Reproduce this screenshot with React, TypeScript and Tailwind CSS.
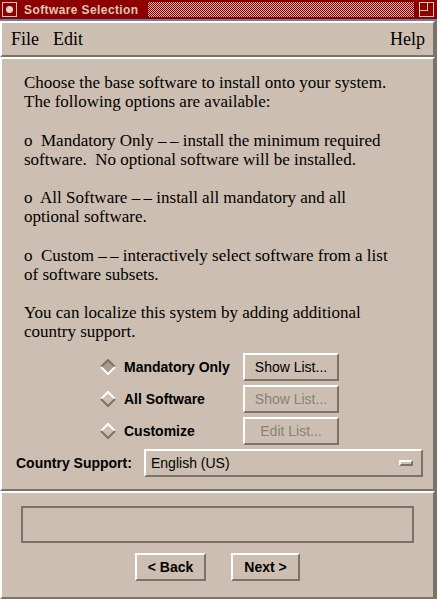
import React from "react";

const serif = "font-['Liberation_Serif','Times_New_Roman',serif]";
const sans = "font-['Liberation_Sans',Arial,sans-serif]";

function Diamond({ selected }: { selected?: boolean }) {
  const top = selected ? "#7b7268" : "#ffffff";
  const bot = selected ? "#ffffff" : "#7b7268";
  return (
    <svg width="16" height="16" viewBox="0 0 16 16" className="block">
      <polygon points="8,1 15,8 8,15 1,8" fill={selected ? "#a89c90" : "#ccbfb1"} />
      <polyline points="1,8 8,1 15,8" fill="none" stroke={top} strokeWidth="2" />
      <polyline points="1,8 8,15 15,8" fill="none" stroke={bot} strokeWidth="2" />
    </svg>
  );
}

function Btn({
  children,
  disabled,
  className = "",
  bold,
}: {
  children: React.ReactNode;
  disabled?: boolean;
  className?: string;
  bold?: boolean;
}) {
  return (
    <div
      className={`flex items-center justify-center border-2 border-t-white border-l-white border-r-[#7b7268] border-b-[#7b7268] bg-[#ccbfb1] text-[14px] ${sans} ${
        bold ? "font-bold" : ""
      } ${disabled ? "text-[#8a8178]" : "text-black"} ${className}`}
    >
      {children}
    </div>
  );
}

const D = "\u2013\u2009\u2013";

export default function App() {
  const paras = [
    ["Choose the base software to install onto your system.", "The following options are available:"],
    [`o  Mandatory Only ${D} install the minimum required`, "software.  No optional software will be installed."],
    [`o  All Software ${D} install all mandatory and all`, "optional software."],
    [`o  Custom ${D} interactively select software from a list`, "of software subsets."],
    ["You can localize this system by adding additional", "country support."],
  ];
  const rows = [
    { label: "Mandatory Only", btn: "Show List...", sel: true, dis: false },
    { label: "All Software", btn: "Show List...", sel: false, dis: true },
    { label: "Customize", btn: "Edit List...", sel: false, dis: true },
  ];
  return (
    <div className="w-[437px] h-[599px] bg-[#ccbfb1] flex flex-col overflow-hidden">
      {/* title bar */}
      <div className="h-[19px] bg-[#8e0000] flex items-center shrink-0">
        <div className="ml-[2px] w-[15px] h-[15px] border border-[#d8c8b8] flex items-center justify-center">
          <div className="w-[7px] h-[7px] rounded-full bg-[#e0d4c8]" />
        </div>
        <div className={`ml-[7px] text-[12px] font-bold tracking-[0.4px] text-[#d9c9b9] ${sans} leading-none`}>
          Software Selection
        </div>
        <div className="ml-[9px] flex-1 h-[15px] bg-[repeating-conic-gradient(#d8b0b0_0_25%,#8e0000_0_50%)] bg-[length:2px_2px]" />
        <div className="ml-[5px] mr-[3px] w-[15px] h-[15px] border border-[#d8c8b8] relative">
          <div className="absolute left-0 top-0 w-[8px] h-[8px] border-r border-b border-[#d8c8b8]" />
        </div>
      </div>
      <div className="h-[2px] bg-[#6f7e99] shrink-0" />
      {/* body */}
      <div className="flex-1 flex flex-col border-r-2 border-r-[#7b7268]">
        {/* menubar */}
        <div
          className={`h-[36px] shrink-0 flex items-center border-2 border-t-white border-l-white border-r-[#7b7268] border-b-[#7b7268] ${serif} text-[18px] text-black`}
        >
          <span className="ml-[9px]">File</span>
          <span className="ml-[14px]">Edit</span>
          <span className="ml-auto mr-[8px]">Help</span>
        </div>
        {/* main panel */}
        <div className="flex-1 flex flex-col border-2 border-t-white border-l-white border-r-[#7b7268] border-b-[#7b7268] pt-[14px] pb-[10px]">
          <div className={`pl-[22px] ${serif} text-[17px] leading-[19px] text-black flex flex-col gap-[19.5px]`}>
            {paras.map((p, i) => (
              <div key={i}>
                {p.map((l, j) => (
                  <div key={j} className="whitespace-pre">
                    {l}
                  </div>
                ))}
              </div>
            ))}
          </div>
          <div className="mt-[12px] flex flex-col gap-[4px] pl-[98px]">
            {rows.map((r, i) => (
              <div key={i} className="flex items-center h-[28px]">
                <Diamond selected={r.sel} />
                <div className={`ml-[8px] w-[119px] ${sans} font-bold text-[14px] text-black`}>{r.label}</div>
                <Btn disabled={r.dis} className="w-[96px] h-[28px]">
                  {r.btn}
                </Btn>
              </div>
            ))}
          </div>
          <div className="mt-[4px] flex items-center h-[28px] pl-[14px]">
            <div className={`${sans} font-bold text-[14px] text-black w-[128px]`}>Country Support:</div>
            <div
              className={`w-[279px] h-[28px] flex items-center border-2 border-t-white border-l-white border-r-[#7b7268] border-b-[#7b7268] ${sans} text-[14px] text-black`}
            >
              <span className="ml-[5px]">English (US)</span>
              <div className="ml-auto mr-[8px] w-[14px] h-[6px] border-t-2 border-l-2 border-t-white border-l-white border-r-2 border-b-2 border-r-[#7b7268] border-b-[#7b7268]" />
            </div>
          </div>
        </div>
        {/* bottom panel */}
        <div className="h-[108px] shrink-0 flex flex-col items-center border-2 border-t-white border-l-white border-r-[#7b7268] border-b-[#7b7268]">
          <div className="mt-[13px] w-[393px] h-[37px] border-2 border-[#7b7268]" />
          <div className="mt-[10px] flex gap-[25px]">
            <Btn bold className="w-[71px] h-[28px]">
              &lt; Back
            </Btn>
            <Btn bold className="w-[69px] h-[28px]">
              Next &gt;
            </Btn>
          </div>
        </div>
      </div>
    </div>
  );
}
